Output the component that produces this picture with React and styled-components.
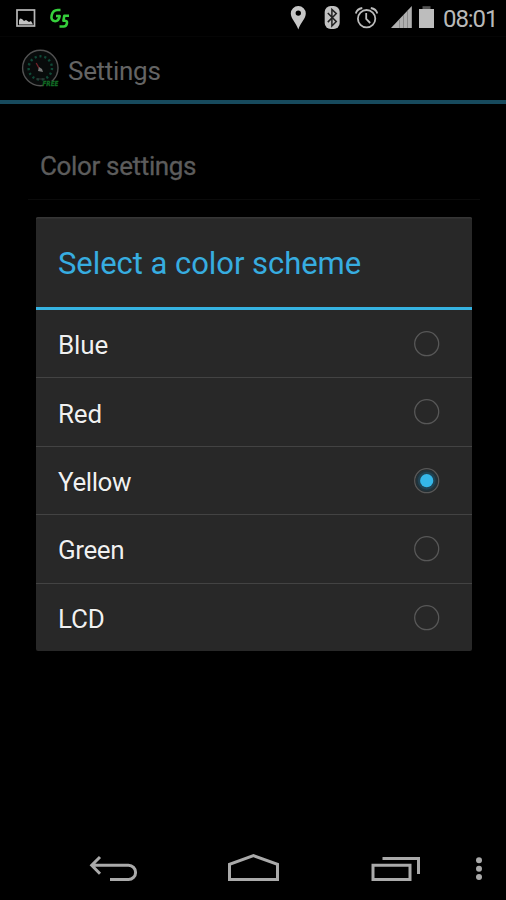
import React from "react";
import styled, { createGlobalStyle } from "styled-components";

const GlobalStyle = createGlobalStyle`
  * { box-sizing: border-box; }
  html, body, #root { margin: 0; height: 100%; background: #000; overflow: hidden; }
`;

const Screen = styled.div`
  position: relative;
  width: 506px;
  height: 900px;
  display: flex;
  flex-direction: column;
  background: #000;
  font-family: Roboto, sans-serif;
  overflow: hidden;
`;

const StatusBar = styled.header`
  height: 37px;
  flex: none;
  display: flex;
  justify-content: space-between;
  align-items: flex-start;
  border-bottom: 1px solid #050505;
`;

const StatusIcons = styled.svg`
  display: block;
  flex: none;
`;

const StatusGroup = styled.div`
  display: flex;
  padding-right: 8px;
`;

const Label = styled.span`
  display: block;
  white-space: nowrap;
  color: ${(p) => p.$color};
  font-size: ${(p) => p.$size}px;
  line-height: 36px;
  letter-spacing: ${(p) => p.$track || 0}px;
`;

const Clock = styled(Label)`
  width: 55px;
  line-height: 38px;
`;

const ActionBar = styled.div`
  height: 67px;
  flex: none;
  display: flex;
  align-items: center;
  gap: 7px;
  padding: 1px 0 0 20px;
  border-bottom: 4px solid #174a5d;
`;

const ActionTitle = styled(Label)`
  padding-top: 3px;
`;

const Content = styled.main`
  flex: 1;
  padding: 30px 26px 0 28px;
`;

const Category = styled.div`
  height: 66px;
  padding: 14px 12px 0;
  border-bottom: 1px solid #0b0b0b;
`;

const CategoryLabel = styled(Label)`
  -webkit-text-stroke: 0.3px #5c5c5c;
`;

const Dialog = styled.section`
  position: absolute;
  left: 36px;
  top: 217px;
  width: 435.5px;
  height: 433.5px;
  background: #282828;
  border-radius: 2px;
  box-shadow: inset 0 1.5px #363636;
`;

const DialogTitle = styled.div`
  height: 93px;
  padding: 29px 22px 0;
  border-bottom: 3px solid #36b3e2;
`;

const Option = styled.div`
  height: ${(p) => (p.$last ? 67.5 : 68.4)}px;
  display: flex;
  justify-content: space-between;
  align-items: center;
  padding: 0.6px 32px 0 22px;
  border-bottom: ${(p) => (p.$last ? "none" : "1px solid #434343")};
`;

const OptionLabel = styled(Label)`
  padding-top: 2.4px;
  text-shadow: 0 0 1px rgba(0, 0, 0, 0.8);
`;

const Radio = styled.svg`
  display: block;
  width: 26px;
  height: 26px;
`;

const NavBar = styled.nav`
  height: 64px;
  flex: none;
  display: flex;
`;

const options = ["Blue", "Red", "Yellow", "Green", "LCD"];
const tracks = { Blue: -0.1, Red: -0.2, Yellow: -0.4, Green: -0.4, LCD: -0.2 };

function NotificationIcons() {
  return (
    <StatusIcons width="100" height="36" viewBox="0 0 100 36" fill="none">
      <rect x="17" y="10" width="17.5" height="16" stroke="#b8b8b8" strokeWidth="1.7" />
      <path d="M19 24.5v-4l1-2 2 .5 2 2 2-1 3 2 2-1 2 3.5z" fill="#c4c4c4" />
      <g stroke="#35cf3b" strokeWidth="2.6" strokeLinejoin="round">
        <path d="M60.5 10H58Q53 9.800 51.700 15.200t3.500 6q3.500 0 4.500-5.200H56" />
        <path d="M69 15.700h-4.700l-.9 5h1.800q2.300.2 1.700 2.800-.6 3-3.200 3H59.500" />
      </g>
    </StatusIcons>
  );
}

function SystemIcons() {
  return (
    <StatusIcons width="159" height="36" viewBox="284 0 159 36" fill="none">
      <path fillRule="evenodd" fill="#c7c7c7" d="M298.3 6a7.4 7.4 0 0 1 7.5 7.4c0 5-5.2 9-7.500 16-2.300-7-7.500-11-7.500-16A7.400 7.400 0 0 1 298.300 6Zm0 4.400a2.700 2.700 0 1 0 0 5.400 2.700 2.700 0 0 0 0-5.400Z" />
      <rect x="324.7" y="6" width="15" height="23" rx="6" fill="#c2c2c2" />
      <path d="m327.8 13 8.5 8.600-4.400 4.400V9.400l4.400 4.200-8.500 8.500" stroke="#222" strokeWidth="1.5" />
      <g stroke="#bcbcbc" strokeWidth="1.8">
        <circle cx="366.600" cy="18.700" r="8.700" />
        <path d="M366.200 13v6l4 4M355.800 13.500q1-4.500 6.500-5.500m15 5.500q-1-4.500-6.500-5.500" />
      </g>
      <path d="M391 28 411.800 6v22z" fill="#b0b0b0" />
      <path d="M399.500 19.500v8.500m4-13v13m4-17v17" stroke="#8b8b8b" />
      <path d="M422.500 6.200h8V9h-8z" fill="#555" />
      <path d="M419 9h15v19h-15z" fill="#bdbdbd" />
    </StatusIcons>
  );
}

const Gauge = styled.svg`
  flex: none;
  display: block;
  font: italic bold 7px "DejaVu Sans", sans-serif;
`;

function GaugeIcon() {
  return (
    <Gauge width="41" height="42" viewBox="20 48 41 42" fill="none">
      <circle cx="40.3" cy="68" r="17.7" fill="#080b0b" stroke="#525252" strokeWidth="1.4" />
      <circle cx="40.3" cy="68" r="11.7" stroke="#104a38" strokeWidth="2.4" strokeDasharray="2.1 2.8" />
      <path d="m39.5 69-3.300-6" stroke="#712129" strokeWidth="1.3" />
      <path d="m38 71 1-4 3 2 1 3z" fill="#777" />
      <path d="M36 79h9" stroke="#343434" />
      <path d="M43 81h15v6H43z" fill="#000" />
      <text x="42.5" y="86" textLength="16" lengthAdjust="spacingAndGlyphs" fill="#126b25" stroke="#126b25" strokeWidth="0.3">FREE</text>
    </Gauge>
  );
}

function RadioButton({ checked }) {
  return (
    <Radio viewBox="0 0 26 26" fill="none">
      <circle cx="12.7" cy="12.7" r="12" stroke="#585858" strokeWidth="1.3" />
      {checked && (
        <>
          <circle cx="12.7" cy="12.7" r="11" fill="#21323a" />
          <circle cx="12.7" cy="12.7" r="9" fill="#204353" />
          <circle cx="12.7" cy="12.7" r="6.6" fill="#35b7e9" />
        </>
      )}
    </Radio>
  );
}

export default function App() {
  return (
    <>
      <GlobalStyle />
      <Screen>
        <StatusBar>
          <NotificationIcons />
          <StatusGroup>
            <SystemIcons />
            <Clock $size={24} $color="#b9b9b9" $track={-1.1}>08:01</Clock>
          </StatusGroup>
        </StatusBar>
        <ActionBar>
          <GaugeIcon />
          <ActionTitle $size={26} $color="#646464" $track={-0.3}>Settings</ActionTitle>
        </ActionBar>
        <Content>
          <Category>
            <CategoryLabel $size={26} $color="#5c5c5c" $track={-0.35}>Color settings</CategoryLabel>
          </Category>
        </Content>
        <NavBar>
          <svg width="506" height="64" viewBox="0 836 506 64" fill="none" stroke="#aaa" strokeWidth="3">
            <path d="M92 865.3h36.5a7 7 0 0 1 0 14.2H110M100 857l-8.3 8.3L100 873.7" />
            <path d="M229.5 879.5V864.3l24-8.6 24 8.6v15.2z" />
            <path d="M373 865.3h37v14.2h-37zM382.5 858.4h36v15.6" />
            <g fill="#aaa" stroke="none">
              <circle cx="479" cy="860.3" r="3" />
              <circle cx="479" cy="868.7" r="3" />
              <circle cx="479" cy="877.1" r="3" />
            </g>
          </svg>
        </NavBar>
        <Dialog>
          <DialogTitle>
            <Label $size={31} $color="#37ade0" $track={-0.05}>Select a color scheme</Label>
          </DialogTitle>
          {options.map((name, i) => (
            <Option key={name} $last={i === options.length - 1}>
              <OptionLabel $size={26} $color="#f0f0f0" $track={tracks[name]}>{name}</OptionLabel>
              <RadioButton checked={name === "Yellow"} />
            </Option>
          ))}
        </Dialog>
      </Screen>
    </>
  );
}
